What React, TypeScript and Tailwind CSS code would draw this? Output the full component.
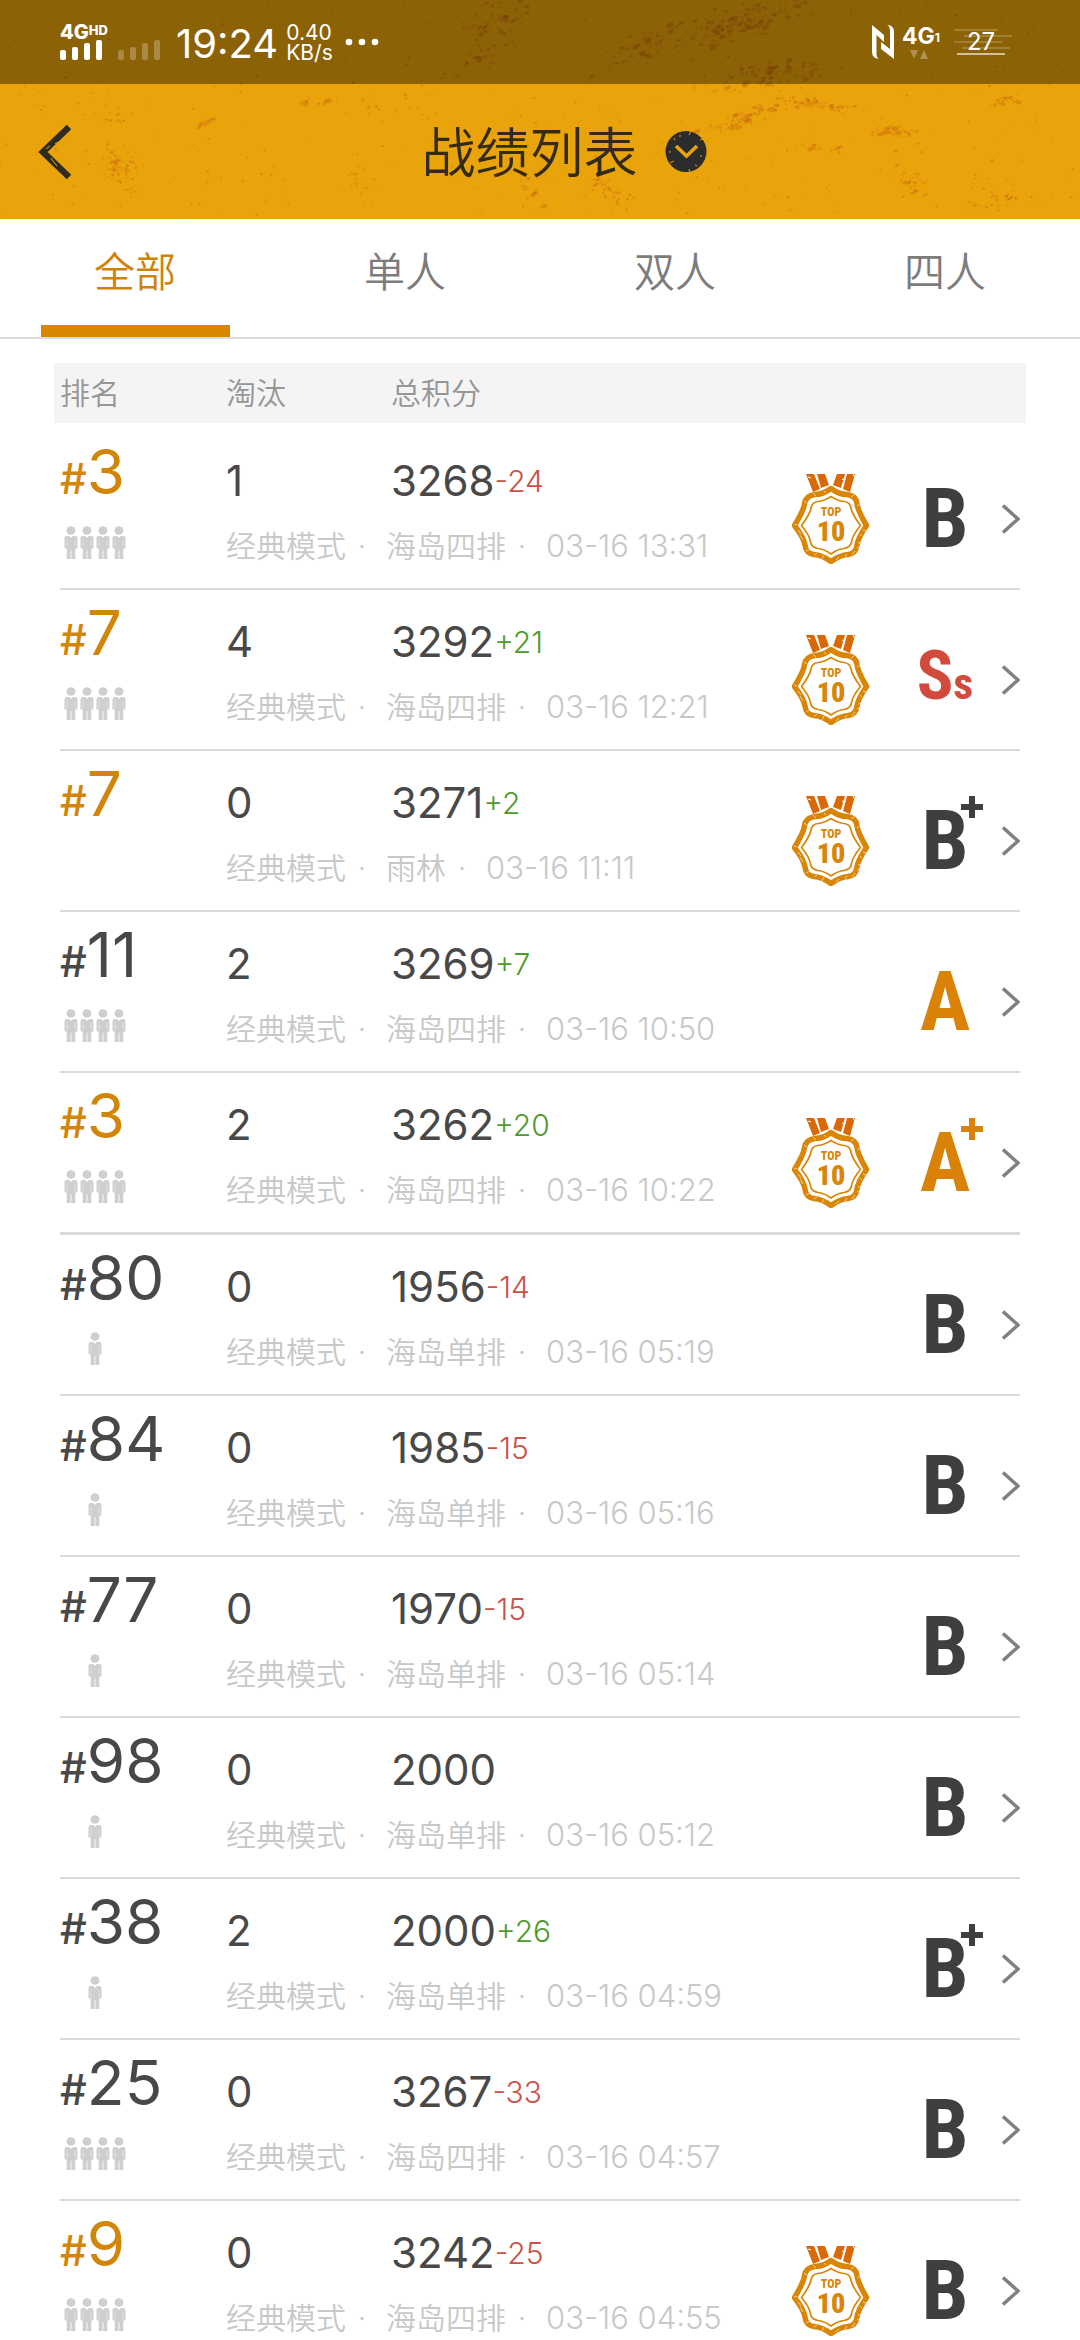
import React from 'react';

type Grade = 'A' | 'A+' | 'B' | 'B+' | 'Ss';

type Match = {
  rank: number;
  kills: number;
  score: number;
  delta: number;
  map: string;
  time: string;
  team: number;
  grade: Grade;
  divider?: boolean;
};

const MATCHES: Match[] = [
  { rank: 3, kills: 1, score: 3268, delta: -24, map: '海岛四排', time: '03-16 13:31', team: 4, grade: 'B' },
  { rank: 7, kills: 4, score: 3292, delta: 21, map: '海岛四排', time: '03-16 12:21', team: 4, grade: 'Ss' },
  { rank: 7, kills: 0, score: 3271, delta: 2, map: '雨林', time: '03-16 11:11', team: 0, grade: 'B+' },
  { rank: 11, kills: 2, score: 3269, delta: 7, map: '海岛四排', time: '03-16 10:50', team: 4, grade: 'A' },
  { rank: 3, kills: 2, score: 3262, delta: 20, map: '海岛四排', time: '03-16 10:22', team: 4, grade: 'A+', divider: true },
  { rank: 80, kills: 0, score: 1956, delta: -14, map: '海岛单排', time: '03-16 05:19', team: 1, grade: 'B' },
  { rank: 84, kills: 0, score: 1985, delta: -15, map: '海岛单排', time: '03-16 05:16', team: 1, grade: 'B' },
  { rank: 77, kills: 0, score: 1970, delta: -15, map: '海岛单排', time: '03-16 05:14', team: 1, grade: 'B' },
  { rank: 98, kills: 0, score: 2000, delta: 0, map: '海岛单排', time: '03-16 05:12', team: 1, grade: 'B' },
  { rank: 38, kills: 2, score: 2000, delta: 26, map: '海岛单排', time: '03-16 04:59', team: 1, grade: 'B+' },
  { rank: 25, kills: 0, score: 3267, delta: -33, map: '海岛四排', time: '03-16 04:57', team: 4, grade: 'B' },
  { rank: 9, kills: 0, score: 3242, delta: -25, map: '海岛四排', time: '03-16 04:55', team: 4, grade: 'B' },
];

/* Deterministic generator, so the grunge specks are the same on every render. */
function seeded(seed: number) {
  let s = seed;
  return () => {
    s = (s * 1664525 + 1013904223) % 4294967296;
    return s / 4294967296;
  };
}

/* x, y, spread x, spread y, slope, count, largest radius */
const CLUSTERS: number[][] = [
  [540, 110, 540, 110, 0, 360, 1],
  [735, 25, 90, 26, -0.3, 150, 4],
  [640, 50, 70, 24, -0.4, 70, 3],
  [770, 75, 90, 20, -0.15, 120, 3],
  [745, 118, 55, 12, -0.35, 70, 4],
  [815, 104, 50, 8, 0.15, 50, 3],
  [895, 132, 45, 8, 0.05, 45, 3],
  [820, 148, 40, 8, 0, 18, 3],
  [500, 20, 50, 24, -0.3, 70, 3],
  [480, 58, 50, 16, -0.3, 50, 2],
  [115, 165, 34, 22, 0.2, 70, 2],
  [110, 120, 20, 14, 0, 14, 2],
  [208, 122, 14, 6, -0.6, 12, 5],
  [315, 102, 34, 6, 0, 14, 4],
  [375, 108, 14, 6, 0.5, 8, 3],
  [130, 192, 20, 10, 0.5, 8, 3],
  [360, 180, 30, 22, 0.3, 16, 3],
  [610, 190, 30, 16, 0.5, 34, 2],
  [530, 190, 18, 18, 0.8, 14, 3],
  [910, 185, 30, 20, 0.4, 34, 2],
  [1000, 200, 50, 18, -0.2, 34, 2],
  [1005, 100, 26, 12, -0.3, 26, 2],
];

const SPECKS = (() => {
  const rnd = seeded(73);
  const bell = () => (rnd() + rnd() + rnd()) / 1.5 - 1;
  return CLUSTERS.flatMap(([cx, cy, sx, sy, slope, n, r]) =>
    Array.from({ length: n }, () => {
      const even = sx > 400;
      const dx = (even ? rnd() * 2 - 1 : bell()) * sx;
      const dy = (even ? rnd() * 2 - 1 : bell()) * sy + dx * slope;
      const w = 0.8 + Math.pow(rnd(), 3) * r;
      return { x: cx + dx, y: cy + dy, w, h: 0.6 + w * 0.4, a: -40 + rnd() * 50, o: 0.15 + rnd() * 0.35 };
    }),
  );
})();

function Texture() {
  return (
    <svg className="absolute inset-0 h-full w-full" viewBox="0 0 1080 219" preserveAspectRatio="xMidYMid slice" aria-hidden="true">
      {SPECKS.map((s, i) => (
        <ellipse
          key={i}
          cx={s.x.toFixed(1)}
          cy={s.y.toFixed(1)}
          rx={s.w.toFixed(1)}
          ry={s.h.toFixed(1)}
          fill="#c8600c"
          opacity={s.o.toFixed(2)}
          transform={`rotate(${s.a.toFixed(0)} ${s.x.toFixed(1)} ${s.y.toFixed(1)})`}
        />
      ))}
    </svg>
  );
}

function Bars({ faint = false }: { faint?: boolean }) {
  return (
    <svg className={faint ? 'h-5 w-[42px] opacity-25' : 'h-5 w-[42px]'} viewBox="0 0 42 20" fill="#fff" aria-hidden="true">
      <rect x="0" y="10" width="6" height="10" rx="2" />
      <rect x="12" y="7" width="6" height="13" rx="2" />
      <rect x="24" y="3" width="6" height="17" rx="2" />
      <rect x="36" y="0" width="6" height="20" rx="2" />
    </svg>
  );
}

function StatusBar() {
  return (
    <div className="relative flex h-[84px] items-center justify-between bg-black/40 pl-[60px] pr-[66px] text-white">
      <div className="flex items-center">
        <div className="flex w-[42px] flex-col">
          <div className="flex items-start text-[20px] leading-4 font-extrabold">
            4G<span className="text-[13px] leading-3">HD</span>
          </div>
          <Bars />
        </div>
        <div className="mt-4 ml-4">
          <Bars faint />
        </div>
        <span className="mt-1 ml-4 text-[40px] leading-[48px]">19:24</span>
        <div className="ml-2 flex flex-col pt-[2px] text-[21px] leading-5">
          <span>0.40</span>
          <span>KB/s</span>
        </div>
        <svg className="ml-3 h-2 w-[34px]" viewBox="0 0 34 8" fill="#fff" aria-hidden="true">
          <circle cx="4" cy="4" r="3.3" />
          <circle cx="17" cy="4" r="3.3" />
          <circle cx="30" cy="4" r="3.3" />
        </svg>
      </div>
      <div className="flex items-center">
        <svg className="h-[34px] w-[22px]" viewBox="0 0 22 34" fill="#fff" aria-label="NFC">
          <path d="M0 0l12 10v7L4.500 10v19q0 4 2.500 5Q0 33 0 27z" />
          <path d="M22 34L9 24v-7l9 7V6q0-5-3-6 7 0 7 7z" />
        </svg>
        <div className="ml-2 flex flex-col">
          <div className="flex items-end text-[23px] leading-5 font-bold">
            4G<span className="text-[12px] leading-4">1</span>
          </div>
          <svg className="mt-1 ml-2 h-[9px] w-[18px] opacity-30" viewBox="0 0 18 9" fill="#fff" aria-hidden="true">
            <path d="M0 0h8L4 9zM10 9h8L14 0z" />
          </svg>
        </div>
        <div className="relative ml-3 flex h-7 w-[62px] items-center justify-center">
          <svg className="absolute inset-0 h-full w-full" viewBox="0 0 62 28" fill="none" stroke="#fff" strokeWidth="1.500" aria-hidden="true">
            <path d="M2 2h44M12 8h48M2 14h48M10 20h48" opacity=".25" />
            <path d="M5 26h48" strokeWidth="2" opacity=".6" />
          </svg>
          <span className="relative mr-1 text-[24px] leading-6">27</span>
        </div>
      </div>
    </div>
  );
}

function TitleBar() {
  return (
    <div className="relative flex h-[135px] items-center justify-center">
      <button type="button" aria-label="返回" className="absolute inset-y-0 left-0 flex items-center pr-8 pl-[38px]">
        <svg className="h-[56px] w-[34px]" viewBox="0 0 34 56" fill="none" aria-hidden="true">
          <path d="M31 3 5 28 31 53" stroke="#2f2b1e" strokeWidth="6.500" />
          <path d="m8 25 4-3m3 15 4 5m-2-22 3-2m-7 16 2 3" stroke="#e9a40c" strokeWidth="1" />
        </svg>
      </button>
      <div className="ml-[48px] flex items-center gap-[27px]">
        <h1 className="pt-1 text-[54px] leading-[64px] font-[350] text-[#332b14]">战绩列表</h1>
        <button type="button" aria-label="选择赛季">
          <svg className="h-[43px] w-[42px]" viewBox="0 0 42 43" fill="none" aria-hidden="true">
            <circle cx="21" cy="21.500" r="20.500" fill="#2c2c2c" />
            <path d="m11 16 10.500 10L32 16" stroke="#e9a40c" strokeWidth="3.500" />
            <path d="m26 1-2 4m1 38-1-4m-19-6 4-2M38 9l-3 1M9 8l1 2m5-5v2m15 28 2 1M4 22h2m29 4h2" stroke="#e9a40c" strokeWidth="1" />
          </svg>
        </button>
      </div>
    </div>
  );
}

const TABS = ['全部', '单人', '双人', '四人'];

function Tabs() {
  const [active, setActive] = React.useState(0);
  return (
    <nav className="grid h-[120px] shrink-0 grid-cols-4 border-b-2 border-[#dcdcdc]">
      {TABS.map((tab, i) => (
        <button
          key={tab}
          type="button"
          aria-pressed={i === active}
          onClick={() => setActive(i)}
          className={
            i === active
              ? 'flex flex-col items-center justify-between pt-6 text-[41px] leading-[58px] font-[350] text-[#cf8208]'
              : 'flex flex-col items-center justify-between pt-6 text-[41px] leading-[58px] font-[350] text-[#7c7c7c]'
          }
        >
          {tab}
          {i === active && <span className="h-3 w-[70%] bg-[#d88600]" />}
        </button>
      ))}
    </nav>
  );
}

function Person() {
  return (
    <svg className="h-[33px] w-[14px]" viewBox="0 0 14 33" fill="#cfcfcf" aria-hidden="true">
      <ellipse cx="7" cy="4.500" rx="4.500" ry="4.300" />
      <path d="M2.500 10h2.800L7 12l1.700-2h2.800q2 0 2 2v9.500q0 1-1.200 1H11.300V33H7.400V24H6.600v9H2.700V22.500H1.700q-1.200 0-1.200-1V12q0-2 2-2z" />
      <path d="M2.900 14v7M11.100 14v7" stroke="#fff" strokeWidth=".4" />
    </svg>
  );
}

function Medal() {
  return (
    <svg className="h-[90px] w-[78px]" viewBox="0 0 78 90" aria-label="TOP 10">
      <path d="M14 0h8l6 15-7 3zM25 0h8l4 11-8 3zM45 0h8l-4 14-8-3zM55 0h8l-5 18-7-3z" fill="#d96806" />
      <path d="M61 0l2 4M16 3l3 1M50 5l2 1" stroke="#fff" strokeWidth="1" />
      <path
        d="M39 14.500Q47 20.500 55 20.500Q64 21.500 65 29.500Q65.500 36 74.500 51.500Q66 64 65 71Q64 79.500 56 80.500Q48 81 39 87.500Q30 81 22 80.500Q14 79.500 13 71Q12 64 2.500 51.500Q12 36 12.500 29.500Q14 21.500 23 20.500Q31 20.500 39 14.500Z"
        fill="none"
        stroke="#d98606"
        strokeWidth="5.500"
        strokeLinejoin="round"
      />
      <path
        d="M39 22.500Q46 27 52 27.500Q58 28 59 34Q60 40 68.500 51.500Q60.500 61 59.500 68Q58.500 73.500 52 74.500Q46 75 39 80Q32 75 26 74.500Q19.500 73.500 18.500 68Q17.500 61 9.500 51.500Q18 40 19 34Q20 28 26 27.500Q32 27 39 22.500Z"
        fill="none"
        stroke="#d98606"
        strokeWidth="1.700"
        strokeLinejoin="round"
      />
      <path
        d="M6 56l3 4m-1 1 3 5m3 11 4-2m4 6 3-2m5 6 2-4m12 5 3-3m6 0 2-3m5 1 3-4m2-3 5-2m-4-3 5-1M12 27l3 2m6-10 3 3m8-5 2 2m25 4 3-2m3 11 3-2M2 50l3 1M71 56l3 1m-6 3 2 2"
        stroke="#fff"
        strokeWidth=".6"
      />
      <g fill="#d98606" textAnchor="middle" fontFamily="Roboto Condensed, sans-serif">
        <text x="39" y="42" fontSize="12" fontWeight="800">TOP</text>
        <text x="39" y="67" fontSize="28" fontWeight="900">10</text>
      </g>
    </svg>
  );
}

function GradeMark({ grade }: { grade: Grade }) {
  const plus = grade.endsWith('+');
  const tone = grade === 'Ss' ? 'text-[#d24a3c]' : grade.startsWith('A') ? 'text-[#d98207]' : 'text-[#3f3f3f]';
  return (
    <div className={`relative flex h-[90px] w-[52px] items-center justify-center font-['Roboto_Condensed',sans-serif] font-bold ${tone}`}>
      {grade === 'Ss' ? (
        <span className="text-[68px] leading-[84px]">
          S<span className="text-[44px]">s</span>
        </span>
      ) : (
        <span className="text-[84px] leading-[84px]">{grade[0]}</span>
      )}
      {plus && (
        <svg className="absolute top-0 -right-3 h-[22px] w-[22px]" viewBox="0 0 22 22" aria-label="+">
          <path d="M8 0h6v8h8v6h-8v8H8v-8H0V8h8z" fill="currentColor" />
        </svg>
      )}
    </div>
  );
}

function MatchRow({ m }: { m: Match }) {
  return (
    <tr
      className={
        m.divider
          ? 'grid grid-cols-[166px_165px_1fr_auto] border-b-3 border-[#dadada]'
          : 'grid grid-cols-[166px_165px_1fr_auto] border-b-2 border-[#dadada]'
      }
    >
      <td className={m.rank <= 10 ? 'row-span-2 pt-[13px] text-[#d1860a]' : 'row-span-2 pt-[13px] text-[#484848]'}>
        <div className="text-[62px] leading-[60px]">
          <span className="text-[42px] leading-10 font-medium">#</span>
          {m.rank}
        </div>
        <div className="mt-6 flex w-[70px] justify-center gap-[2px]">
          {Array.from({ length: m.team }, (_, i) => (
            <Person key={i} />
          ))}
        </div>
      </td>
      <td className="pt-[22px] text-[42px] leading-[60px] text-[#484848]">{m.kills}</td>
      <td className="flex items-center pt-[22px] text-[42px] leading-[60px] text-[#484848]">
        <span>{m.score}</span>
        {m.delta !== 0 && (
          <span className={m.delta > 0 ? 'text-[30px] font-light text-[#4f9a2c]' : 'text-[30px] font-light text-[#cb5147]'}>
            {m.delta > 0 ? `+${m.delta}` : m.delta}
          </span>
        )}
      </td>
      <td className="col-start-4 row-span-2 row-start-1 flex items-start pt-[45px]">
        {m.rank <= 10 && <Medal />}
        <div className="ml-[49px]">
          <GradeMark grade={m.grade} />
        </div>
        <a href="#detail" aria-label="查看详情" className="ml-[31px] flex h-[90px] items-center">
          <svg className="h-[30px] w-[18px]" viewBox="0 0 18 30" fill="none" stroke="#808080" strokeWidth="3.500" aria-hidden="true">
            <path d="M1 1.500 16 15 1 28.500" />
          </svg>
        </a>
      </td>
      <td className="col-span-2 col-start-2 row-start-2 flex pt-[15px] pb-[22px] text-[30px] leading-10 font-[350] whitespace-nowrap text-[#c8c8c8]">
        <span>经典模式</span>
        <span className="mr-2 w-8 text-center">·</span>
        <span>{m.map}</span>
        <span className="mr-2 w-8 text-center">·</span>
        <span className="text-[31px]">{m.time}</span>
      </td>
    </tr>
  );
}

export default function App() {
  return (
    <div className="flex h-screen flex-col overflow-hidden bg-white font-['Inter','Noto_Sans_CJK_SC',sans-serif]">
      <header className="relative shrink-0 bg-[#e9a40c]">
        <Texture />
        <StatusBar />
        <TitleBar />
      </header>
      <Tabs />
      <main className="min-h-0 flex-1 overflow-hidden pt-6">
        <table className="block w-full">
          <thead className="mx-[54px] block bg-[#f4f4f4] px-[6px]">
            <tr className="grid grid-cols-[166px_165px_1fr] text-left text-[30px] leading-[60px] text-[#969696]">
              <th className="font-[350]">排名</th>
              <th className="font-[350]">淘汰</th>
              <th className="font-[350]">总积分</th>
            </tr>
          </thead>
          <tbody className="mx-[60px] mt-[6px] block">
            {MATCHES.map((m) => (
              <MatchRow key={m.time} m={m} />
            ))}
          </tbody>
        </table>
      </main>
    </div>
  );
}
